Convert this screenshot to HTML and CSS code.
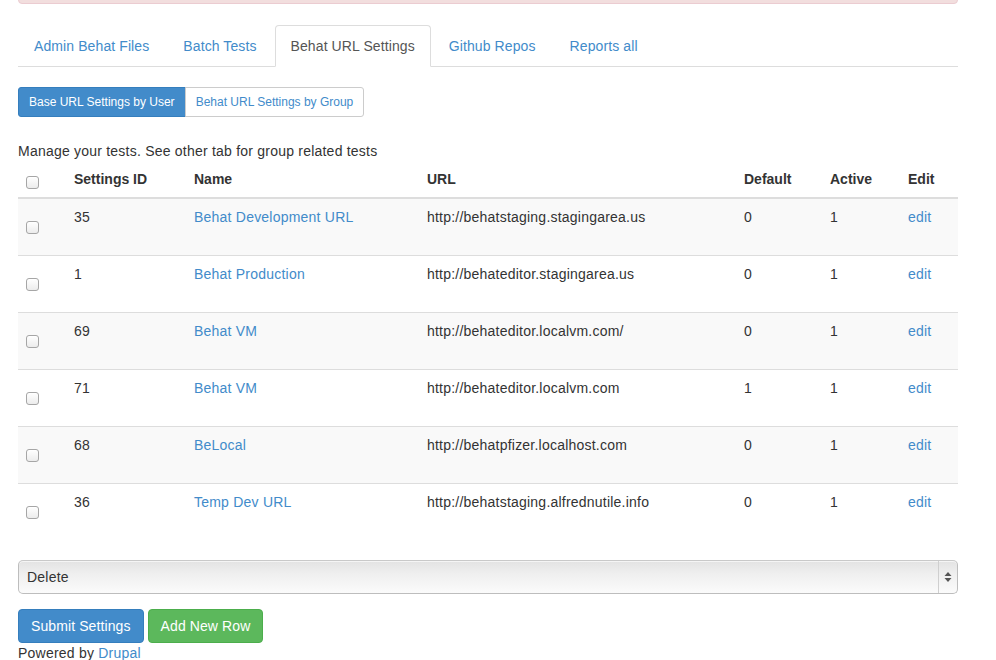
FILE: index.html
```html
<!DOCTYPE html>
<html>
<head>
<meta charset="utf-8">
<title>Behat URL Settings</title>
<link rel="stylesheet" href="styles.css">
</head>
<body>
<div class="container">
  <div class="alert"></div>

  <ul class="nav-tabs">
    <li><a href="#">Admin Behat Files</a></li>
    <li><a href="#">Batch Tests</a></li>
    <li class="active"><a href="#">Behat URL Settings</a></li>
    <li><a href="#">Github Repos</a></li>
    <li><a href="#">Reports all</a></li>
  </ul>

  <div class="btn-group">
    <a class="btn-sm btn-sm-primary" href="#">Base URL Settings by User</a>
    <a class="btn-sm btn-sm-default" href="#">Behat URL Settings by Group</a>
  </div>

  <p class="intro">Manage your tests. See other tab for group related tests</p>

  <table class="table">
    <thead>
      <tr>
        <th class="col-check"><input type="checkbox" class="cb"></th>
        <th class="col-id">Settings ID</th>
        <th class="col-name">Name</th>
        <th class="col-url">URL</th>
        <th class="col-def">Default</th>
        <th class="col-act">Active</th>
        <th class="col-edit">Edit</th>
      </tr>
    </thead>
    <tbody>
      <tr class="odd">
        <td><div class="checkbox"><input type="checkbox" class="cb"></div></td>
        <td>35</td><td><a href="#">Behat Development URL</a></td>
        <td>http://behatstaging.stagingarea.us</td><td>0</td><td>1</td><td><a href="#">edit</a></td>
      </tr>
      <tr>
        <td><div class="checkbox"><input type="checkbox" class="cb"></div></td>
        <td>1</td><td><a href="#">Behat Production</a></td>
        <td>http://behateditor.stagingarea.us</td><td>0</td><td>1</td><td><a href="#">edit</a></td>
      </tr>
      <tr class="odd">
        <td><div class="checkbox"><input type="checkbox" class="cb"></div></td>
        <td>69</td><td><a href="#">Behat VM</a></td>
        <td>http://behateditor.localvm.com/</td><td>0</td><td>1</td><td><a href="#">edit</a></td>
      </tr>
      <tr>
        <td><div class="checkbox"><input type="checkbox" class="cb"></div></td>
        <td>71</td><td><a href="#">Behat VM</a></td>
        <td>http://behateditor.localvm.com</td><td>1</td><td>1</td><td><a href="#">edit</a></td>
      </tr>
      <tr class="odd">
        <td><div class="checkbox"><input type="checkbox" class="cb"></div></td>
        <td>68</td><td><a href="#">BeLocal</a></td>
        <td>http://behatpfizer.localhost.com</td><td>0</td><td>1</td><td><a href="#">edit</a></td>
      </tr>
      <tr class="last">
        <td><div class="checkbox"><input type="checkbox" class="cb"></div></td>
        <td>36</td><td><a href="#">Temp Dev URL</a></td>
        <td>http://behatstaging.alfrednutile.info</td><td>0</td><td>1</td><td><a href="#">edit</a></td>
      </tr>
    </tbody>
  </table>

  <div class="select-wrap">
    <select class="select">
      <option>Delete</option>
    </select>
    <span class="select-arrows">
      <svg width="8" height="12" viewBox="0 0 8 12"><polygon points="4,1 7.5,5 0.5,5" fill="#555"/><polygon points="0.5,7 7.5,7 4,11" fill="#555"/></svg>
    </span>
  </div>

  <div class="actions">
    <button class="btn btn-primary">Submit Settings</button>
    <button class="btn btn-success">Add New Row</button>
  </div>

  <p class="footer">Powered by <a href="#">Drupal</a></p>
</div>
</body>
</html>
```

FILE: styles.css
```css
* { box-sizing: border-box; }

html, body {
  margin: 0;
  padding: 0;
  background: #fff;
}

body {
  font-family: "Liberation Sans", Arial, Helvetica, sans-serif;
  font-size: 14px;
  line-height: 20px;
  letter-spacing: 0.22px;
  color: #333;
}

a {
  color: #428bca;
  text-decoration: none;
}

.container {
  width: 940px;
  margin-left: 18px;
}

.alert {
  height: 54px;
  margin-top: -50px;
  margin-bottom: 21px;
  background: #f2dede;
  border: 1px solid #ebccd1;
  border-radius: 4px;
}

.nav-tabs {
  list-style: none;
  margin: 0;
  padding: 0;
  display: flex;
  border-bottom: 1px solid #ddd;
  letter-spacing: 0.1px;
}

.nav-tabs li {
  margin-bottom: -1px;
}

.nav-tabs a {
  display: block;
  margin-right: 2px;
  padding: 10px 15px;
  line-height: 20px;
  border: 1px solid transparent;
  border-radius: 4px 4px 0 0;
  color: #428bca;
}

.nav-tabs .active a {
  color: #555;
  background: #fff;
  border-color: #ddd #ddd transparent;
}

.btn-group {
  display: flex;
  margin-top: 20px;
}

.btn-sm {
  display: block;
  padding: 5px 10px;
  font-size: 12px;
  line-height: 18px;
  letter-spacing: 0;
  border: 1px solid;
}

.btn-sm-primary {
  background: #428bca;
  border-color: #357ebd;
  color: #fff;
  border-radius: 3px 0 0 3px;
}

.btn-sm-default {
  background: #fff;
  border-color: #ccc;
  color: #428bca;
  border-radius: 0 3px 3px 0;
  margin-left: -1px;
}

.intro {
  margin: 24px 0 0;
}

.table {
  width: 100%;
  border-collapse: collapse;
  border-spacing: 0;
  margin-bottom: 20px;
}

.table th,
.table td {
  padding: 8px;
  text-align: left;
  vertical-align: top;
  line-height: 20px;
}

.table th {
  font-weight: bold;
  letter-spacing: 0;
  vertical-align: bottom;
  border-bottom: 2px solid #ddd;
}

.table td {
  border-top: 1px solid #ddd;
}

.table thead + tbody tr:first-child td {
  border-top: 0;
}

.table tr.odd td {
  background: #f9f9f9;
}

.col-check { width: 48px; }
.col-id { width: 120px; }
.col-name { width: 233px; }
.col-url { width: 317px; }
.col-def { width: 86px; }
.col-act { width: 78px; }

.checkbox {
  display: flow-root;
  margin: 10px 0;
  min-height: 20px;
}

.cb {
  appearance: none;
  -webkit-appearance: none;
  display: block;
  width: 13px;
  height: 13px;
  margin: 4px 0 0;
  border: 1px solid #a6a6a6;
  border-radius: 3px;
  background: linear-gradient(#ffffff, #ececec);
  box-shadow: inset 0 1px 0 #fff;
}

.checkbox .cb {
  margin-top: 4px;
}

th .cb {
  margin: 2px 0 0;
}

.select-wrap {
  display: flex;
  height: 34px;
  border: 1px solid #bdbdbd;
  border-top-color: #c9c9c9;
  border-radius: 5px;
  background: linear-gradient(#e3e3e3 0%, #efefef 40%, #fbfbfb 100%);
  box-shadow: inset 0 1px 0 #f5f5f5;
}

.select {
  appearance: none;
  -webkit-appearance: none;
  flex: 1;
  border: 0;
  background: transparent;
  font-family: "Liberation Sans", Arial, Helvetica, sans-serif;
  font-size: 14px;
  letter-spacing: 0.22px;
  color: #333;
  padding: 0 8px;
  outline: none;
}

.select-arrows {
  width: 19px;
  display: flex;
  align-items: center;
  justify-content: center;
  border-left: 1px solid #cfcfcf;
}

.actions {
  display: flex;
  gap: 4px;
  margin-top: 15px;
}

.btn {
  font-family: "Liberation Sans", Arial, Helvetica, sans-serif;
  font-size: 14px;
  line-height: 20px;
  letter-spacing: 0.1px;
  padding: 6px 12px;
  border: 1px solid;
  border-radius: 4px;
  color: #fff;
  cursor: pointer;
}

.btn-primary {
  background: #428bca;
  border-color: #357ebd;
}

.btn-success {
  background: #5cb85c;
  border-color: #4cae4c;
}

.footer {
  margin: 0;
  line-height: 20px;
}
```
